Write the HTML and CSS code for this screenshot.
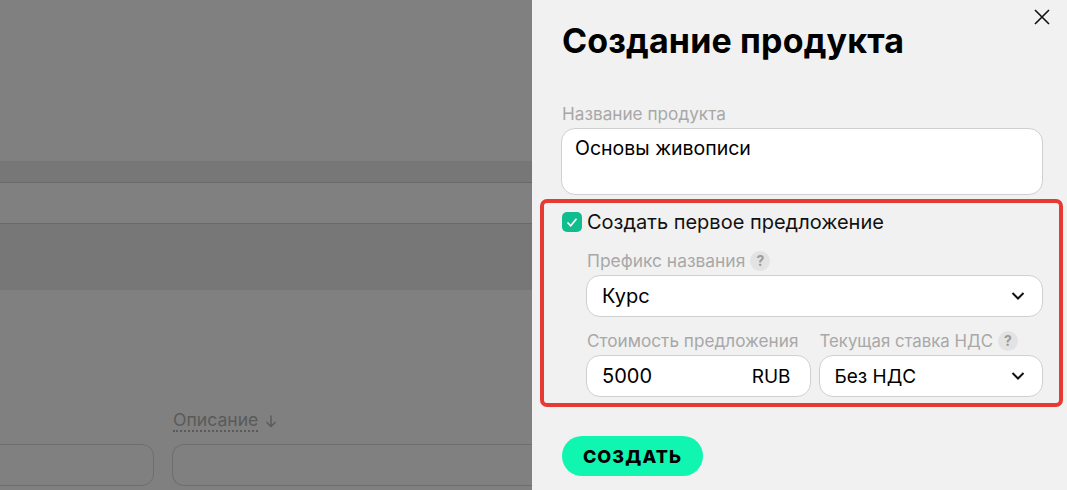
FILE: index.html
```html
<!DOCTYPE html>
<html lang="ru">
<head>
<meta charset="utf-8">
<title>Создание продукта</title>
<link rel="stylesheet" href="styles.css">
</head>
<body>
<div class="page">
  <main class="backdrop">
    <div class="band band-head"></div>
    <div class="band-plain"></div>
    <div class="band band-body"></div>
    <div class="filters">
      <div class="filter filter-a"><div class="filter-box"></div></div>
      <div class="filter filter-b">
        <div class="filter-title"><span class="dotted">Описание</span>
          <svg class="sort" viewBox="0 0 14 14" width="14" height="14"><path d="M7 1.5V12.5M2.5 8L7 12.5L11.5 8" fill="none" stroke="#5a5a5a" stroke-width="1.4"/></svg>
        </div>
        <div class="filter-box"></div>
      </div>
    </div>
  </main>
  <aside class="panel">
    <button class="close" aria-label="Закрыть">
      <svg viewBox="0 0 16 16" width="16" height="16"><path d="M1 1L15 15M15 1L1 15" fill="none" stroke="#111" stroke-width="1.6"/></svg>
    </button>
    <h1 class="title">Создание продукта</h1>
    <label class="field-label name-label">Название продукта</label>
    <div class="control textarea">Основы живописи</div>
    <section class="frame">
      <div class="check-row">
        <span class="checkbox"><svg viewBox="0 0 20 20" width="20" height="20"><path d="M5.5 10.5L8.7 13.7L14.5 6.8" fill="none" stroke="#fff" stroke-width="1.6"/></svg></span>
        <span class="check-text">Создать первое предложение</span>
      </div>
      <div class="offer">
        <div class="field-label wide">Префикс названия <span class="hint">?</span></div>
        <div class="control select">
          <span class="value-wide">Курс</span>
          <svg class="chev" viewBox="0 0 14 10" width="14" height="10"><path d="M1.5 2L7 7.5L12.5 2" fill="none" stroke="#111" stroke-width="2"/></svg>
        </div>
        <div class="pair">
          <div class="col">
            <div class="field-label">Стоимость предложения</div>
            <div class="control select price"><span class="value-wide">5000</span><span>RUB</span></div>
          </div>
          <div class="col">
            <div class="field-label narrow">Текущая ставка НДС <span class="hint">?</span></div>
            <div class="control select">
              <span>Без НДС</span>
              <svg class="chev" viewBox="0 0 14 10" width="14" height="10"><path d="M1.5 2L7 7.5L12.5 2" fill="none" stroke="#111" stroke-width="2"/></svg>
            </div>
          </div>
        </div>
      </div>
    </section>
    <button class="submit">Создать</button>
  </aside>
</div>
</body>
</html>
```
FILE: styles.css
```css
* { box-sizing: border-box; }
html, body { margin: 0; height: 100%; }
body { font-family: Inter, "Noto Sans", sans-serif; overflow: hidden; }
.page { display: flex; width: 1067px; height: 490px; overflow: hidden; }

.backdrop { width: 532px; flex: none; background: #808080; padding-top: 161px; display: flex; flex-direction: column; }
.band { background: #777; border-bottom: 1px solid #696969; }
.band-head { height: 22px; }
.band-plain { height: 41px; border-bottom: 1px solid #696969; }
.band-body { height: 66px; border-bottom: 0; }
.filters { display: flex; gap: 18px; margin-top: 120px; margin-left: -200px; }
.filter { display: flex; flex-direction: column; justify-content: flex-end; }
.filter-a { width: 354px; }
.filter-b { flex: 1; }
.filter-title { height: 34px; font-size: 17.6px; color: #5a5a5a; display: flex; align-items: flex-start; gap: 6px; padding-left: 1px; }
.dotted { border-bottom: 2px dotted #5a5a5a; line-height: 20px; }
.sort { margin-top: 4px; }
.filter-box { height: 42px; border: 1px solid #6e6e6e; border-radius: 12px; }
.filter-b .filter-box { border-right: 0; border-radius: 12px 0 0 12px; }

.panel { position: relative; width: 535px; flex: none; background: #f1f1f1; padding: 0 24px 0 29px; display: flex; flex-direction: column; }
.close { position: absolute; top: 9px; right: 17px; padding: 0; border: 0; background: none; width: 16px; height: 16px; display: block; }
.close svg { display: block; }
.title { margin: 20px 0 0 1px; font-size: 34px; line-height: 42px; font-weight: 700; letter-spacing: 0.15px; color: #000; white-space: nowrap; }
.field-label { font-size: 17.2px; line-height: 20px; color: #a8a8a8; display: flex; align-items: center; gap: 5px; white-space: nowrap; }
.field-label.narrow { font-size: 16.8px; }
.field-label.wide { font-size: 17.4px; }
.name-label { margin: 42px 0 4px 1px; height: 20px; }
.control { background: #fff; border: 1px solid #cfcfcf; border-radius: 14px; color: #000; font-size: 19px; }
.textarea { height: 67px; padding: 7px 13px; line-height: 24px; font-size: 19.5px; }
.frame { margin: 4px 0 0 -21px; width: 523px; height: 208px; border: 4px solid #e63a33; border-radius: 7px; padding: 9px 16px 0 18px; }
.check-row { display: flex; align-items: center; gap: 5px; height: 20px; }
.checkbox { width: 20px; height: 20px; border-radius: 5px; background: #10bd8e; flex: none; }
.checkbox svg { display: block; }
.check-text { font-size: 20px; color: #111; white-space: nowrap; }
.offer { margin: 16px 0 0 24px; }
.offer .field-label { height: 27px; margin-left: 1px; padding-bottom: 2px; }
.select { height: 42px; padding: 0 17px 0 15px; display: flex; align-items: center; justify-content: space-between; }
.value-wide { font-size: 20px; }
.price { padding-right: 19px; }
.pair { display: flex; gap: 8px; margin-top: 11px; }
.col { flex: 1; min-width: 0; }
.hint { width: 20px; height: 20px; border-radius: 50%; background: #e3e3e3; color: #9a9a9a; font-size: 14px; font-weight: 700; display: inline-flex; align-items: center; justify-content: center; }
.chev { display: block; }
.submit { margin: 29px 0 0 1px; width: 141px; height: 40px; border: 0; border-radius: 20px; background: #10f5b0; color: #000; font-family: inherit; font-weight: 800; font-size: 18px; text-transform: uppercase; letter-spacing: 1.1px; padding: 0; }
```
